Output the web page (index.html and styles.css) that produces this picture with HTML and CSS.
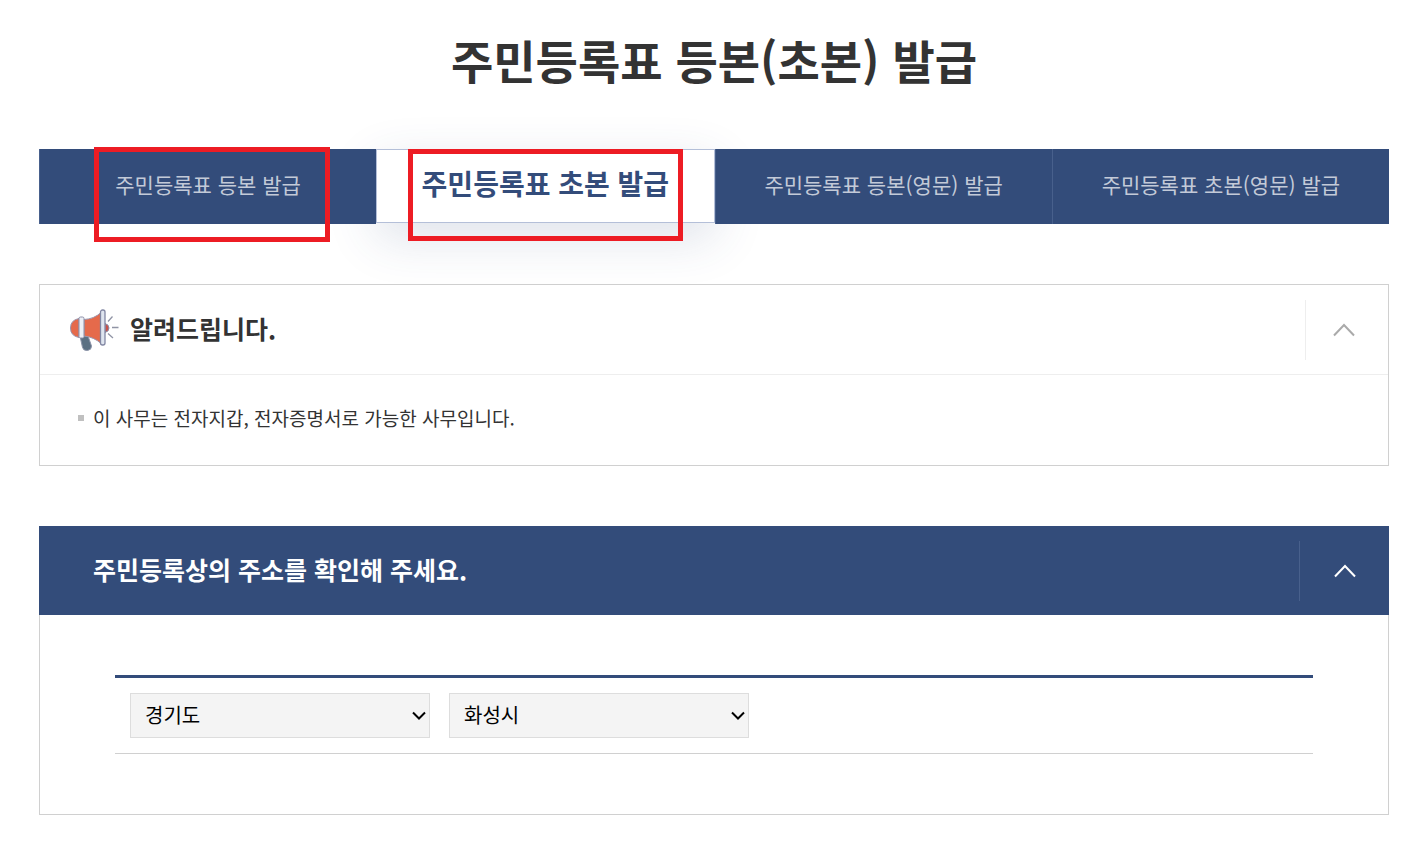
FILE: index.html
```html
<!DOCTYPE html>
<html lang="ko">
<head>
    <meta charset="utf-8" />
    <title>주민등록표 등본(초본) 발급</title>
    <link rel="stylesheet" href="styles.css">
</head>
<body>
<main class="page">
    <h1 class="page-title">주민등록표 등본(초본) 발급</h1>

    <nav class="tabs">
        <a class="tab" href="#">주민등록표 등본 발급<span class="mark mark-first"></span></a>
        <a class="tab active" href="#" aria-current="page">주민등록표 초본 발급<span class="mark mark-second"></span></a>
        <a class="tab" href="#">주민등록표 등본(영문) 발급</a>
        <a class="tab" href="#">주민등록표 초본(영문) 발급</a>
    </nav>

    <section class="notice">
        <div class="notice-head">
            <svg class="megaphone" width="52" height="44" viewBox="0 0 52 44" aria-hidden="true">
                <path d="M12 28h8l3.500 10q0 4-4 4.500q-4 .5-5-3z" fill="#5b7083" stroke="#8b93a8"/>
                <path d="M37 15.500q4 1 4 4.500t-4 4.500z" fill="#c9524a" stroke="#8b8ea8"/>
                <path d="M11 10.500Q2.500 12 2.500 20t8.500 9.500z" fill="#e56a4b" stroke="#9a95ad"/>
                <path d="M16 11.500Q26 11 33 4.500v31Q26 29 16 28z" fill="#e56a4b" stroke="#9a95ad"/>
                <rect x="11" y="9" width="5" height="21" rx="1.500" fill="#edf0f6" stroke="#8b8ea8"/>
                <rect x="32.500" y="2" width="4.500" height="35" rx="2" fill="#dfe5ef" stroke="#8287a3" stroke-width="1.300"/>
                <path d="M40 13.500l4.500-5M44 19.500h6.500M40 25.500l5 4.500" fill="none" stroke="#9094a5" stroke-width="1.300"/>
            </svg>
            <h2>알려드립니다.</h2>
            <button class="toggle" type="button" aria-label="알려드립니다 접기">
                <svg width="24" height="16" viewBox="0 0 24 16"><path d="M2 13.500L12 3l10 10.500"/></svg>
            </button>
        </div>
        <ul class="notice-list">
            <li>이 사무는 전자지갑, 전자증명서로 가능한 사무입니다.</li>
        </ul>
    </section>

    <section class="address">
        <div class="address-head">
            <h2>주민등록상의 주소를 확인해 주세요.</h2>
            <button class="toggle" type="button" aria-label="주소 확인 접기">
                <svg width="24" height="16" viewBox="0 0 24 16"><path d="M2 13.500L12 3l10 10.500"/></svg>
            </button>
        </div>
        <form class="address-body">
            <div class="address-row">
                <select name="sido" aria-label="시/도">
                    <option selected>경기도</option>
                </select>
                <select name="sigungu" aria-label="시/군/구">
                    <option selected>화성시</option>
                </select>
            </div>
        </form>
    </section>
</main>
</body>
</html>
```
FILE: styles.css
```css
*{box-sizing:border-box}
body{margin:0; background:#fff; color:#333; font-family:"Noto Sans CJK KR", "Noto Sans", sans-serif;}
h1, h2, ul{margin:0; padding:0}
.page{padding:27px 29px 28px 39px}
.page-title{margin-bottom:58px; font-size:46px; line-height:64px; font-weight:700; text-align:center}

/* tabs */
.tabs{display:flex; position:relative; z-index:0; margin-bottom:60px}
.tab{flex:1; position:relative; height:75px; border-left:1px solid #48608c; background:#334c7a; color:#c3cad8; font-size:21px; line-height:70px; text-align:center; text-decoration:none}
.tab.active{z-index:-1; height:74px; border:1px solid #b4bfd8; background:#fff; color:#334c7a; font-size:28px; line-height:66px; font-weight:700; box-shadow:0 15px 50px rgba(51,76,122,.16)}
.mark{position:absolute; border:5px solid #ed1c24; pointer-events:none}
.mark-first{left:54px; top:-2px; width:236px; height:95px}
.mark-second{left:31px; top:-1px; width:275px; height:92px}

/* notice */
.notice{margin-bottom:60px; border:1px solid #d0d0d0}
.notice-head{display:flex; align-items:center; height:90px; padding-left:28px; border-bottom:1px solid #eee}
.notice-head h2{flex:1; margin-left:10px}
.notice-list{padding:28px 38px 32px; list-style:none}
.notice-list li{display:flex; align-items:center; gap:9px; font-size:19px; line-height:30px}
.notice-list li::before{content:""; width:6px; height:6px; background:#c0c0c0}

h2{padding-bottom:4px; font-size:25px; line-height:36px}
.toggle{display:flex; align-items:center; justify-content:center; height:60px; padding:0; border:0; background:none; cursor:pointer}
.toggle path{fill:none; stroke:#aaa; stroke-width:2}
.notice .toggle{width:83px; padding-right:6px; border-left:1px solid #eee}

/* address */
.address-head{display:flex; align-items:center; height:89px; padding-left:54px; background:#334c7a; color:#fff}
.address-head h2{flex:1}
.address .toggle{width:90px; border-left:1px solid #48608c}
.address .toggle path{stroke:#fff}
.address-body{padding:60px 75px; border:1px solid #d0d0d0; border-top:0}
.address-row{display:flex; gap:19px; padding:15px; border-top:3px solid #334c7a; border-bottom:1px solid #d0d0d0}
.address-row select{
    width:300px; height:45px; padding:0 20px 2px 14px;
    border:1px solid #ddd; border-radius:0; appearance:none;
    background:#f4f4f4 url("data:image/svg+xml,%3Csvg xmlns='http://www.w3.org/2000/svg' width='14' height='10'%3E%3Cpath d='M1 1.500l6 6 6-6' fill='none' stroke='%23000' stroke-width='2'/%3E%3C/svg%3E") no-repeat right 3px center;
    color:#000; font-family:inherit; font-size:20px;
}
```
